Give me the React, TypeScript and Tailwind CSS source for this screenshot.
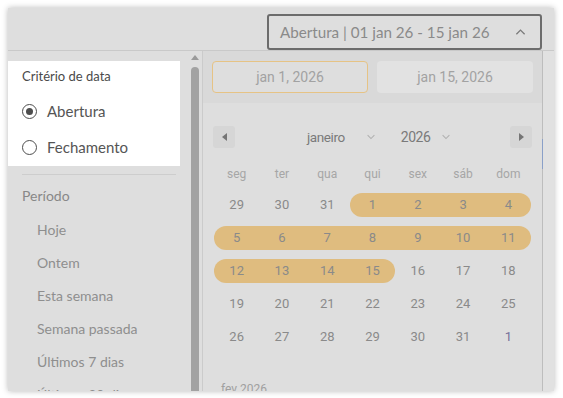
import React from 'react';

const weekDays = ['seg', 'ter', 'qua', 'qui', 'sex', 'sáb', 'dom'];

const weeks = [
  [29, 30, 31, 1, 2, 3, 4],
  [5, 6, 7, 8, 9, 10, 11],
  [12, 13, 14, 15, 16, 17, 18],
  [19, 20, 21, 22, 23, 24, 25],
  [26, 27, 28, 29, 30, 31, 1],
];

const presets = ['Hoje', 'Ontem', 'Esta semana', 'Semana passada', 'Últimos 7 dias', 'Últimos 30 dias'];

const Chevron = ({ up = false, className = '' }: { up?: boolean; className?: string }) => (
  <svg viewBox="0 0 12 8" className={className} fill="none" stroke="currentColor" strokeWidth="1.4">
    {up ? <polyline points="1.5,6.5 6,2 10.5,6.5" /> : <polyline points="1.5,1.5 6,6 10.5,1.5" />}
  </svg>
);

const Radio = ({ checked }: { checked: boolean }) => (
  <span className="w-[15px] h-[15px] rounded-full border-[1.5px] border-[#4d4d4d] flex items-center justify-center">
    {checked && <span className="w-[7px] h-[7px] rounded-full bg-[#4d4d4d]" />}
  </span>
);

const App = () => {
  return (
    <div className="w-[563px] h-[398px] bg-white p-2 overflow-hidden">
      <div className="w-[546px] h-[383px] bg-[#dedede] shadow-[0_0_6px_rgba(0,0,0,0.28)] flex flex-col overflow-hidden font-['Lato',sans-serif]">
        {/* header */}
        <div className="h-[43px] shrink-0 border-b border-[#c9c9c9] flex justify-end items-end pr-[12px]">
          <button className="w-[275px] h-[36px] border-2 border-[#6c6c6c] rounded-[3px] flex items-center pl-[11px] pr-[14px] text-[15.2px] text-[#8a8a8a]">
            <span>Abertura | 01 jan 26 - 15 jan 26</span>
            <Chevron up className="w-[11px] h-[8px] ml-auto text-[#7a7a7a]" />
          </button>
        </div>

        <div className="flex flex-1 min-h-0">
          {/* sidebar */}
          <div className="w-[182px] shrink-0 pt-[10px] overflow-hidden">
            <div className="w-[172px] h-[105px] bg-white pl-[14px] pt-[6px]">
              <div className="text-[13px] leading-[18px] text-[#4a4a4a]">Critério de data</div>
              <label className="flex items-center gap-[10px] mt-[15px] h-[22px]">
                <Radio checked />
                <span className="text-[15px] text-[#555]">Abertura</span>
              </label>
              <label className="flex items-center gap-[10px] mt-[14px] h-[22px]">
                <Radio checked={false} />
                <span className="text-[15px] text-[#555]">Fechamento</span>
              </label>
            </div>
            <div className="mx-[14px] mt-[8px] border-t border-[#cdcdcd]" />
            <div className="pl-[14px] mt-[11px] text-[14px] leading-[20px] text-[#888]">Período</div>
            <ul className="pl-[29px] mt-[14px] flex flex-col gap-[13px] text-[14px] leading-[20px] text-[#8e8e8e]">
              {presets.map((p) => (
                <li key={p}>{p}</li>
              ))}
            </ul>
          </div>

          {/* scrollbar */}
          <div className="w-[10px] shrink-0 flex flex-col items-center pt-[4px]">
            <span className="w-0 h-0 border-l-[4px] border-r-[4px] border-b-[5px] border-l-transparent border-r-transparent border-b-[#9a9a9a]" />
            <span className="mt-[7px] w-[8px] flex-1 bg-[#a2a2a2] rounded-t-[4px]" />
          </div>
          <div className="w-[2px] shrink-0" />

          {/* calendar */}
          <div className="w-[340px] shrink-0 border-l border-[#cbcbcb] flex flex-col font-['Roboto',sans-serif] overflow-hidden">
            <div className="h-[52px] shrink-0 bg-[#d9d9d9] flex gap-[9px] px-[9px] pt-[10px]">
              <div className="w-[156px] h-[32px] rounded-[4px] border border-[#e6c385] bg-[#dedede] flex items-center justify-center text-[14px] text-[#a2a2a2]">
                jan 1, 2026
              </div>
              <div className="w-[156px] h-[32px] rounded-[4px] bg-[#e2e2e2] flex items-center justify-center text-[14px] text-[#a2a2a2]">
                jan 15, 2026
              </div>
            </div>

            <div className="mt-[23px] h-[22px] flex items-center px-[10px]">
              <div className="w-[22px] h-[22px] rounded-[3px] bg-[#d6d6d6] flex items-center justify-center">
                <span className="w-0 h-0 border-t-[4px] border-b-[4px] border-r-[5px] border-t-transparent border-b-transparent border-r-[#757575]" />
              </div>
              <span className="ml-[72px] text-[13.5px] tracking-[-0.4px] text-[#7a7a7a]">janeiro</span>
              <Chevron className="ml-[21px] w-[10px] h-[6px] text-[#b0b0b0]" />
              <span className="ml-[25px] text-[14px] tracking-[-0.5px] text-[#7a7a7a]">2026</span>
              <Chevron className="ml-[11px] w-[10px] h-[6px] text-[#b0b0b0]" />
              <div className="ml-auto w-[22px] h-[22px] rounded-[3px] bg-[#d6d6d6] flex items-center justify-center">
                <span className="w-0 h-0 border-t-[4px] border-b-[4px] border-l-[5px] border-t-transparent border-b-transparent border-l-[#757575]" />
              </div>
            </div>

            <div className="px-[11px] mt-[16px]">
              <div className="grid grid-cols-7 h-[20px] items-center text-center text-[12px] text-[#a6a6a6]">
                {weekDays.map((d) => (
                  <span key={d}>{d}</span>
                ))}
              </div>
              <div className="mt-[9px] flex flex-col gap-[9px]">
                {weeks.map((week, wi) => (
                  <div key={wi} className="grid grid-cols-7 h-[24px] text-center text-[13px]">
                    {week.map((day, di) => {
                      const inMonth = !(wi === 0 && day > 20) && !(wi === 4 && day < 10);
                      const inRange = inMonth && day >= 1 && day <= 15;
                      const start = inRange && (day === 1 || di === 0);
                      const end = inRange && (day === 15 || di === 6);
                      return (
                        <div
                          key={di}
                          className={
                            'flex items-center justify-center ' +
                            (inRange ? 'bg-[#dfbc7f] ' : '') +
                            (start ? 'rounded-l-full ' : '') +
                            (end ? 'rounded-r-full ' : '') +
                            (wi === 4 && di === 6 ? 'text-[#77709a]' : 'text-[#8a8a8a]')
                          }
                        >
                          {day}
                        </div>
                      );
                    })}
                  </div>
                ))}
              </div>
              <div className="mt-[31px] pl-[7px] text-[12px] text-[#a0a0a0]">fev 2026</div>
            </div>
          </div>

          {/* right strip */}
          <div className="w-[12px] shrink-0 border-l border-[#bdbdbd] bg-[#e1e1e1] flex flex-col">
            <div className="mt-[88px] h-[30px] w-px -ml-px bg-[#8aa0c8]" />
          </div>
        </div>
      </div>
    </div>
  );
};

export default App;
